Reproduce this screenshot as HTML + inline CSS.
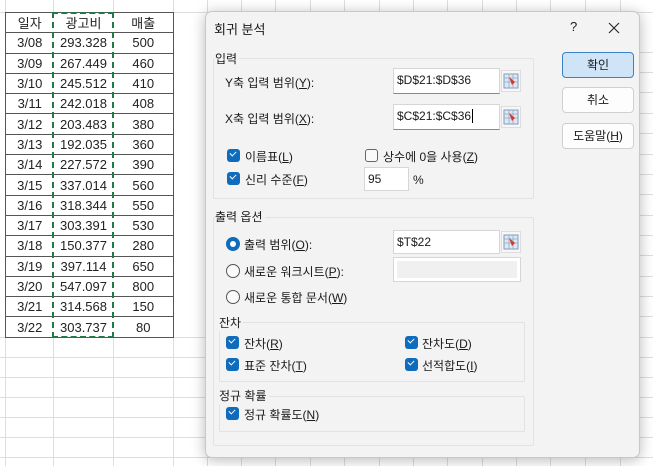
<!DOCTYPE html>
<html><head><meta charset="utf-8"><style>
*{margin:0;padding:0;box-sizing:border-box}
body{width:653px;height:466px;overflow:hidden;background:#fff;position:relative;font-family:"Liberation Sans","Noto Sans CJK KR",sans-serif;font-size:12px;color:#1a1a1a}
.vl{position:absolute;top:0;bottom:0;width:1px;background:#dedede}
.hl{position:absolute;left:0;right:0;height:1px;background:#dedede}
table{position:absolute;left:5px;top:12px;border-collapse:collapse;font-size:13px;color:#222;background:#fff}
td{border:1px solid #555;height:20.3px;text-align:center;padding:0}
td:first-child{border-right:none}
td:last-child{border-left:none}
td.c{border-left:none;border-right:none}
.dash{position:absolute;left:52px;top:12px;width:62px;height:326px;border:2px dashed #1f7a45}
.dlg{position:absolute;left:205px;top:11px;width:435px;height:447px;background:#f3f3f3;border:1px solid #c8c8c8;border-radius:7px;box-shadow:0 2px 14px rgba(0,0,0,.28)}
.grp{position:absolute;border:1px solid #e2e2e2;border-radius:2px}
.lbl{position:absolute;white-space:nowrap}
.inp{position:absolute;background:#fff;border:1px solid #d6d6d6;border-bottom:1px solid #8a8a8a;padding-left:3px;line-height:22px}
.ic{position:absolute;width:20px;height:22px;background:#f7f7f7;border:1px solid #ddd}
.cb{position:absolute;width:13px;height:13px;background:#0f6cbd;border-radius:3px}
.cb:after{content:"";position:absolute;left:3px;top:2px;width:5px;height:3px;border-left:1.5px solid #fff;border-bottom:1.5px solid #fff;transform:rotate(-45deg)}
.cbo{position:absolute;width:13px;height:13px;border:1px solid #666;border-radius:3px;background:#fafafa}
.rd{position:absolute;width:14px;height:14px;border:1px solid #555;border-radius:50%;background:#fafafa}
.rdo{position:absolute;width:14px;height:14px;border-radius:50%;background:#0f6cbd}
.rdo:after{content:"";position:absolute;left:4px;top:4px;width:6px;height:6px;border-radius:50%;background:#fff}
.btn{position:absolute;left:356px;width:72px;height:26px;background:#fdfdfd;border:1px solid #d0d0d0;border-radius:4px;text-align:center;line-height:24px}
u{text-decoration:underline}
</style></head><body>
<div class="vl" style="left:5px"></div><div class="vl" style="left:53px"></div><div class="vl" style="left:113px"></div><div class="vl" style="left:173px"></div>
<div class="vl" style="left:207px"></div><div class="vl" style="left:241px"></div><div class="vl" style="left:275px"></div><div class="vl" style="left:310px"></div><div class="vl" style="left:344px"></div><div class="vl" style="left:379px"></div><div class="vl" style="left:413px"></div><div class="vl" style="left:447px"></div><div class="vl" style="left:482px"></div><div class="vl" style="left:516px"></div><div class="vl" style="left:550px"></div><div class="vl" style="left:585px"></div><div class="vl" style="left:620px"></div>
<div class="hl" style="top:12px"></div><div class="hl" style="top:337px"></div><div class="hl" style="top:357px"></div><div class="hl" style="top:377px"></div><div class="hl" style="top:397px"></div><div class="hl" style="top:417px"></div><div class="hl" style="top:437px"></div><div class="hl" style="top:457px"></div>
<div class="hl" style="top:52px;left:640px"></div><div class="hl" style="top:72px;left:640px"></div><div class="hl" style="top:92px;left:640px"></div><div class="hl" style="top:113px;left:640px"></div><div class="hl" style="top:133px;left:640px"></div><div class="hl" style="top:154px;left:640px"></div><div class="hl" style="top:174px;left:640px"></div><div class="hl" style="top:194px;left:640px"></div><div class="hl" style="top:215px;left:640px"></div><div class="hl" style="top:235px;left:640px"></div><div class="hl" style="top:255px;left:640px"></div><div class="hl" style="top:276px;left:640px"></div><div class="hl" style="top:296px;left:640px"></div><div class="hl" style="top:316px;left:640px"></div>
<table>
<colgroup><col style="width:48px"><col style="width:60px"><col style="width:60px"></colgroup>
<tr><td>일자</td><td class="c">광고비</td><td>매출</td></tr>
<tr><td>3/08</td><td class="c">293.328</td><td>500</td></tr>
<tr><td>3/09</td><td class="c">267.449</td><td>460</td></tr>
<tr><td>3/10</td><td class="c">245.512</td><td>410</td></tr>
<tr><td>3/11</td><td class="c">242.018</td><td>408</td></tr>
<tr><td>3/12</td><td class="c">203.483</td><td>380</td></tr>
<tr><td>3/13</td><td class="c">192.035</td><td>360</td></tr>
<tr><td>3/14</td><td class="c">227.572</td><td>390</td></tr>
<tr><td>3/15</td><td class="c">337.014</td><td>560</td></tr>
<tr><td>3/16</td><td class="c">318.344</td><td>550</td></tr>
<tr><td>3/17</td><td class="c">303.391</td><td>530</td></tr>
<tr><td>3/18</td><td class="c">150.377</td><td>280</td></tr>
<tr><td>3/19</td><td class="c">397.114</td><td>650</td></tr>
<tr><td>3/20</td><td class="c">547.097</td><td>800</td></tr>
<tr><td>3/21</td><td class="c">314.568</td><td>150</td></tr>
<tr><td>3/22</td><td class="c">303.737</td><td>80</td></tr>
</table>
<div class="dash"></div>

<div class="dlg">
<div class="lbl" style="left:8px;top:7px;font-size:13px">회귀 분석</div>
<div class="lbl" style="left:364px;top:7px;font-size:13px">?</div>
<svg class="lbl" style="left:401px;top:9px" width="14" height="14"><path d="M2 2L12 12M12 2L2 12" stroke="#222" stroke-width="1.1"/></svg>

<div class="grp" style="left:7px;top:46px;width:321px;height:141px"></div>
<div class="lbl" style="left:9px;top:38px;background:#f3f3f3;padding-right:2px">입력</div>
<div class="lbl" style="left:19px;top:62px">Y축 입력 범위(<u>Y</u>):</div>
<div class="inp" style="left:187px;top:56px;width:107px;height:26px">$D$21:$D$36</div>
<div class="ic" style="left:295px;top:58px"><svg width="18" height="20"><rect x="2" y="3" width="14" height="14" fill="#dfe8f2" stroke="#7f9bc0"/><path d="M2 7h14M2 11h14M7 3v14M11 3v14" stroke="#9fb3cf"/><path d="M7 6l6 5-3 3z" fill="#d0392b"/></svg></div>
<div class="lbl" style="left:19px;top:98px">X축 입력 범위(<u>X</u>):</div>
<div class="inp" style="left:187px;top:92px;width:107px;height:26px">$C$21:$C$36<span style="border-left:1px solid #000;margin-left:1px"></span></div>
<div class="ic" style="left:295px;top:94px"><svg width="18" height="20"><rect x="2" y="3" width="14" height="14" fill="#dfe8f2" stroke="#7f9bc0"/><path d="M2 7h14M2 11h14M7 3v14M11 3v14" stroke="#9fb3cf"/><path d="M7 6l6 5-3 3z" fill="#d0392b"/></svg></div>
<div class="cb" style="left:21px;top:137px"></div><div class="lbl" style="left:39px;top:136px">이름표(<u>L</u>)</div>
<div class="cbo" style="left:159px;top:137px"></div><div class="lbl" style="left:177px;top:136px">상수에 0을 사용(<u>Z</u>)</div>
<div class="cb" style="left:21px;top:160px"></div><div class="lbl" style="left:39px;top:159px">신리 수준(<u>F</u>)</div>
<div class="inp" style="left:158px;top:155px;width:45px;height:24px;border-bottom-color:#d6d6d6">95</div>
<div class="lbl" style="left:207px;top:161px">%</div>

<div class="grp" style="left:7px;top:205px;width:321px;height:229px"></div>
<div class="lbl" style="left:9px;top:196px;background:#f3f3f3;padding-right:2px">출력 옵션</div>
<div class="rdo" style="left:20px;top:225px"></div><div class="lbl" style="left:38px;top:224px">출력 범위(<u>O</u>):</div>
<div class="inp" style="left:187px;top:218px;width:107px;height:24px;border-bottom-color:#d6d6d6">$T$22</div>
<div class="ic" style="left:295px;top:219px"><svg width="18" height="20"><rect x="2" y="3" width="14" height="14" fill="#dfe8f2" stroke="#7f9bc0"/><path d="M2 7h14M2 11h14M7 3v14M11 3v14" stroke="#9fb3cf"/><path d="M7 6l6 5-3 3z" fill="#d0392b"/></svg></div>
<div class="rd" style="left:20px;top:252px"></div><div class="lbl" style="left:38px;top:251px">새로운 워크시트(<u>P</u>):</div>
<div class="inp" style="left:187px;top:245px;width:128px;height:25px;background:#f0f0f0;border:1px solid #d6d6d6;box-shadow:inset 0 0 0 3px #fff"></div>
<div class="rd" style="left:20px;top:278px"></div><div class="lbl" style="left:38px;top:277px">새로운 통합 문서(<u>W</u>)</div>

<div class="grp" style="left:13px;top:310px;width:306px;height:60px"></div>
<div class="lbl" style="left:13px;top:302px;background:#f3f3f3;padding-right:2px">잔차</div>
<div class="cb" style="left:20px;top:324px"></div><div class="lbl" style="left:38px;top:323px">잔차(<u>R</u>)</div>
<div class="cb" style="left:199px;top:324px"></div><div class="lbl" style="left:216px;top:323px">잔차도(<u>D</u>)</div>
<div class="cb" style="left:20px;top:346px"></div><div class="lbl" style="left:38px;top:345px">표준 잔차(<u>T</u>)</div>
<div class="cb" style="left:199px;top:346px"></div><div class="lbl" style="left:216px;top:345px">선적합도(<u>I</u>)</div>

<div class="grp" style="left:13px;top:384px;width:306px;height:36px"></div>
<div class="lbl" style="left:13px;top:375px;background:#f3f3f3;padding-right:2px">정규 확률</div>
<div class="cb" style="left:20px;top:395px"></div><div class="lbl" style="left:38px;top:394px">정규 확률도(<u>N</u>)</div>

<div class="btn" style="top:40px;background:#cfe4f7;border:1px solid #3b82c4">확인</div>
<div class="btn" style="top:75px">취소</div>
<div class="btn" style="top:111px">도움말(<u>H</u>)</div>
</div>
</body></html>
